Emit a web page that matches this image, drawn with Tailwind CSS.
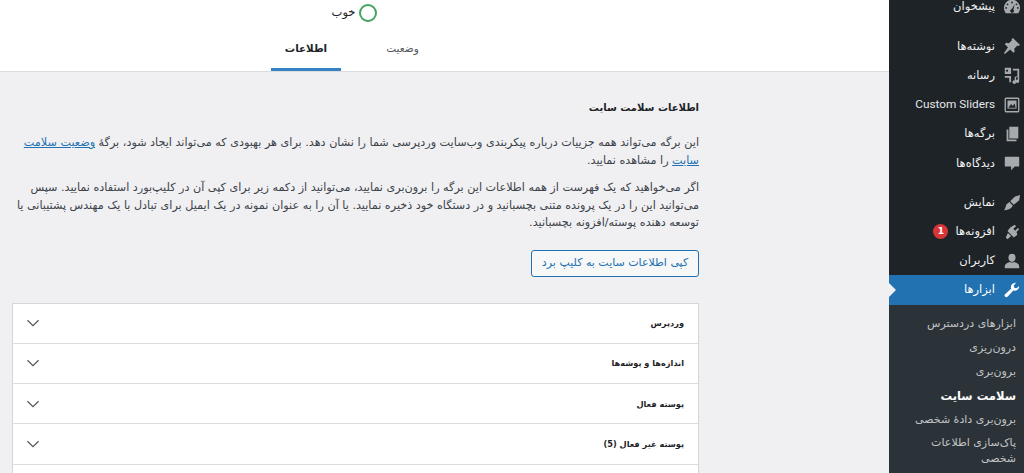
<!DOCTYPE html>
<html lang="fa" dir="rtl">
<head>
    <meta charset="UTF-8">
    <title>سلامت سایت</title>
    <script src="https://cdn.jsdelivr.net/npm/@tailwindcss/browser@4"></script>
</head>
<body class="h-[473px] w-[1024px] overflow-hidden bg-[#f0f0f3] font-['DejaVu_Sans','Noto_Sans',sans-serif] text-[#3c434a]">
<div class="flex h-[473px]">
    <!-- sidebar -->
    <aside class="w-[135px] h-full shrink-0 bg-[#1d2327] overflow-hidden text-[#f0f0f1] text-[11.5px]">
        <div class="-mt-[8px]">
            <a class="flex items-center h-[29px] pr-[3px] gap-[8px]">
                <svg class="w-[18px] h-[18px] text-[#a7aaad]" viewBox="0 0 20 20" fill="currentColor"><path d="M10 2a9 9 0 0 0-8 13l1 2h14l1-2A9 9 0 0 0 10 2zm0 2a1 1 0 1 1 0 2 1 1 0 0 1 0-2zM5 6a1 1 0 1 1 0 2 1 1 0 0 1 0-2zm10 0a1 1 0 1 1 0 2 1 1 0 0 1 0-2zM3.500 10a1 1 0 1 1 0 2 1 1 0 0 1 0-2zm13 0a1 1 0 1 1 0 2 1 1 0 0 1 0-2zM13 7l-1.500 6a2 2 0 1 1-2-.5z"/></svg>
                <span>پیشخوان</span>
            </a>
            <div class="h-[10.500px]"></div>
            <a class="flex items-center h-[29.300px] pr-[3px] gap-[8px]">
                <svg class="w-[18px] h-[18px] text-[#a7aaad]" viewBox="0 0 20 20" fill="currentColor"><path d="M11 1l8 8-2 1-1-.500-3.500 3.500.5 3-1.500 1.500-3.500-3.500L2 19l-1-1 4.500-6.500L2 8l1.500-1.500 3 .5L10 3.500 9.500 2.500z"/></svg>
                <span>نوشته‌ها</span>
            </a>
            <a class="flex items-center h-[29.300px] pr-[3px] gap-[8px]">
                <svg class="w-[18px] h-[18px] text-[#a7aaad]" viewBox="0 0 20 20" fill="currentColor"><path d="M2 2h7v7H2zm2.500 2a1.200 1.200 0 1 0 .01 0zM11 3h7v8h-2V5h-5zM2 11h7v7H7v-5H2zM13 12l5-1v6a2 2 0 1 1-1.500-2v-2.500l-2 .4V18a2 2 0 1 1-1.500-2z"/></svg>
                <span>رسانه</span>
            </a>
            <a class="flex items-center h-[29.300px] pr-[3px] gap-[8px]">
                <svg class="w-[18px] h-[18px] text-[#a7aaad]" viewBox="0 0 20 20" fill="none" stroke="currentColor"><rect x="2.500" y="2.500" width="15" height="15" rx="1" stroke-width="1.500"/><path d="M5 5h10v9H5z" fill="currentColor" stroke="none"/><path d="M6 13l3-4 2 2 2-3 1 5z" fill="#1d2327" stroke="none"/></svg>
                <span dir="ltr" class="font-['Roboto',sans-serif] text-[11.800px] text-[#e6e7e8]">Custom Sliders</span>
            </a>
            <a class="flex items-center h-[29.300px] pr-[3px] gap-[8px]">
                <svg class="w-[18px] h-[18px] text-[#a7aaad]" viewBox="0 0 20 20" fill="currentColor"><path d="M7 2h10v13H7zM4 5h2v11h9v2H4z"/></svg>
                <span>برگه‌ها</span>
            </a>
            <a class="flex items-center h-[29.300px] pr-[3px] gap-[8px]">
                <svg class="w-[18px] h-[18px] text-[#a7aaad]" viewBox="0 0 20 20" fill="currentColor"><path d="M3 3h14a1 1 0 0 1 1 1v9a1 1 0 0 1-1 1h-4l-4 4v-4H3a1 1 0 0 1-1-1V4a1 1 0 0 1 1-1z"/></svg>
                <span>دیدگاه‌ها</span>
            </a>
            <div class="h-[10px]"></div>
            <a class="flex items-center h-[29.300px] pr-[3px] gap-[8px]">
                <svg class="w-[18px] h-[18px] text-[#a7aaad]" viewBox="0 0 20 20" fill="currentColor"><path d="M19 1l-1 6-6 5-4-4 5-5zM7 9l4 4-1.500 2c-2 2-5 3-8.500 3 2-1.500 1.500-4 3-6.500z"/></svg>
                <span>نمایش</span>
            </a>
            <a class="flex items-center h-[29.300px] pr-[3px] gap-[8px]">
                <svg class="w-[18px] h-[18px] text-[#a7aaad]" viewBox="0 0 20 20" fill="currentColor"><path d="M13 2l1.500 1.500-3 3 2 2 3-3L18 7l-3 3 1 3-4 3-7-7 3-4zM5.500 11l3.500 3.500-4 3.500-2-2z"/></svg>
                <span>افزونه‌ها</span>
                <span dir="ltr" class="w-[15px] h-[15px] -mr-[1px] rounded-full bg-[#d63638] text-white text-[9px] font-bold flex items-center justify-center">1</span>
            </a>
            <a class="flex items-center h-[28.800px] pr-[3px] gap-[8px]">
                <svg class="w-[18px] h-[18px] text-[#a7aaad]" viewBox="0 0 20 20" fill="currentColor"><path d="M10 2a4 4 0 0 1 4 4c0 2.500-1.500 5-4 5S6 8.500 6 6a4 4 0 0 1 4-4zM2 16c0-3 3-4 5.500-5 1.500 1 3.500 1 5 0 2.500 1 5.500 2 5.500 5v2H2z"/></svg>
                <span>کاربران</span>
            </a>
            <div class="relative">
                <a class="flex items-center h-[29.300px] pr-[3px] gap-[8px] bg-[#2271b1] text-white">
                    <svg class="w-[18px] h-[18px]" viewBox="0 0 20 20" fill="currentColor"><path d="M18 5.500a5 5 0 0 1-6.500 5L5 17.500a2 2 0 0 1-3-2.500l7-6.500A5 5 0 0 1 14.500 2L12 5l.5 2.500L15 8l3-2.500z"/></svg>
                    <span class="font-medium">ابزارها</span>
                </a>
                <!-- notch pointing to the content -->
                <span class="absolute left-0 top-[8px] border-y-[7px] border-y-transparent border-l-[7px] border-l-[#f0f0f3]"></span>
            </div>
            <ul class="bg-[#2c3338] pt-[7px] pb-[8px] pr-[8px] pl-[8px] text-[11px] text-[#c3c4c7]">
                <li class="h-[24px] leading-[24px]">ابزارهای دردسترس</li>
                <li class="h-[24px] leading-[24px]">درون‌ریزی</li>
                <li class="h-[24px] leading-[24px]">برون‌بری</li>
                <li class="h-[24.500px] leading-[24.500px] text-white font-bold text-[11.500px]">سلامت سایت</li>
                <li class="h-[24px] leading-[24px]">برون‌بری دادهٔ شخصی</li>
                <li class="leading-[16px] pt-[3px]">پاک‌سازی اطلاعات شخصی</li>
            </ul>
        </div>
    </aside>

    <!-- main -->
    <main class="flex-1 min-w-0 h-full overflow-hidden">
        <header class="h-[72px] bg-white border-b border-[#dcdcde]">
            <div class="w-[687px] mr-[190px] flex flex-col items-center">
                <div class="flex items-center gap-[4px] h-[26px] -translate-x-[1px]">
                    <span class="w-[18px] h-[18px] rounded-full border-2 border-[#46a35e]"></span>
                    <span class="text-[11.500px] text-[#1d2327]">خوب</span>
                </div>
                <nav class="flex justify-center h-[45px] -translate-x-[1px]">
                    <a class="w-[97px] pt-[3px] pl-[26px] flex items-center justify-center border-b-[3px] border-transparent text-[10.500px] text-[#50575e]">وضعیت</a>
                    <a class="w-[70px] pt-[3px] flex items-center justify-center border-b-[3px] border-[#3582c4] text-[10.300px] font-bold text-[#1d2327]">اطلاعات</a>
                </nav>
            </div>
        </header>

        <section class="w-[687px] mr-[190px]">
            <h2 class="mt-[27px] text-[10px] font-bold leading-[18px] text-[#1d2327]">اطلاعات سلامت سایت</h2>
            <p class="mt-[17px] text-[11.200px] leading-[17.500px]">
                این برگه می‌تواند همه جزییات درباره پیکربندی وب‌سایت وردپرسی شما را نشان دهد. برای هر بهبودی که می‌تواند ایجاد شود، برگهٔ <a class="text-[#2271b1] underline">وضعیت سلامت سایت</a> را مشاهده نمایید.
            </p>
            <p class="mt-[10px] text-[11.200px] leading-[17.500px]">
                اگر می‌خواهید که یک فهرست از همه اطلاعات این برگه را برون‌بری نمایید، می‌توانید از دکمه زیر برای کپی آن در کلیپ‌بورد استفاده نمایید. سپس می‌توانید این را در یک پرونده متنی بچسبانید و در دستگاه خود ذخیره نمایید. یا آن را به عنوان نمونه در یک ایمیل برای تبادل با یک مهندس پشتیبانی یا توسعه دهنده پوسته/افزونه بچسبانید.
            </p>
            <button class="mt-[18px] h-[27px] w-[168px] rounded-[3px] border border-[#2271b1] bg-[#f6f7f7] text-[11px] text-[#2271b1]">کپی اطلاعات سایت به کلیپ برد</button>

            <div class="mt-[26px] border-x border-t border-[#c3c4c7]/70 bg-white">
                <div class="h-[40.300px] pr-[14px] pl-[14px] flex items-center justify-between border-b border-[#dcdcde]">
                    <span class="text-[8.200px] font-bold text-[#1d2327]">وردپرس</span>
                    <svg class="w-[12px] h-[8px] text-[#50575e]" viewBox="0 0 13 8" fill="none" stroke="currentColor" stroke-width="1.300"><path d="M.5 1l6 6 6-6"/></svg>
                </div>
                <div class="h-[40.300px] pr-[14px] pl-[14px] flex items-center justify-between border-b border-[#dcdcde]">
                    <span class="text-[8.200px] font-bold text-[#1d2327]">اندازه‌ها و پوشه‌ها</span>
                    <svg class="w-[12px] h-[8px] text-[#50575e]" viewBox="0 0 13 8" fill="none" stroke="currentColor" stroke-width="1.300"><path d="M.5 1l6 6 6-6"/></svg>
                </div>
                <div class="h-[40.300px] pr-[14px] pl-[14px] flex items-center justify-between border-b border-[#dcdcde]">
                    <span class="text-[8.200px] font-bold text-[#1d2327]">پوسته فعال</span>
                    <svg class="w-[12px] h-[8px] text-[#50575e]" viewBox="0 0 13 8" fill="none" stroke="currentColor" stroke-width="1.300"><path d="M.5 1l6 6 6-6"/></svg>
                </div>
                <div class="h-[40.300px] pr-[14px] pl-[14px] flex items-center justify-between border-b border-[#dcdcde]">
                    <span class="text-[8.200px] font-bold text-[#1d2327]">پوسته غیر فعال (5)</span>
                    <svg class="w-[12px] h-[8px] text-[#50575e]" viewBox="0 0 13 8" fill="none" stroke="currentColor" stroke-width="1.300"><path d="M.5 1l6 6 6-6"/></svg>
                </div>
                <div class="h-[40.300px]"></div>
            </div>
        </section>
    </main>
</div>
</body>
</html>
